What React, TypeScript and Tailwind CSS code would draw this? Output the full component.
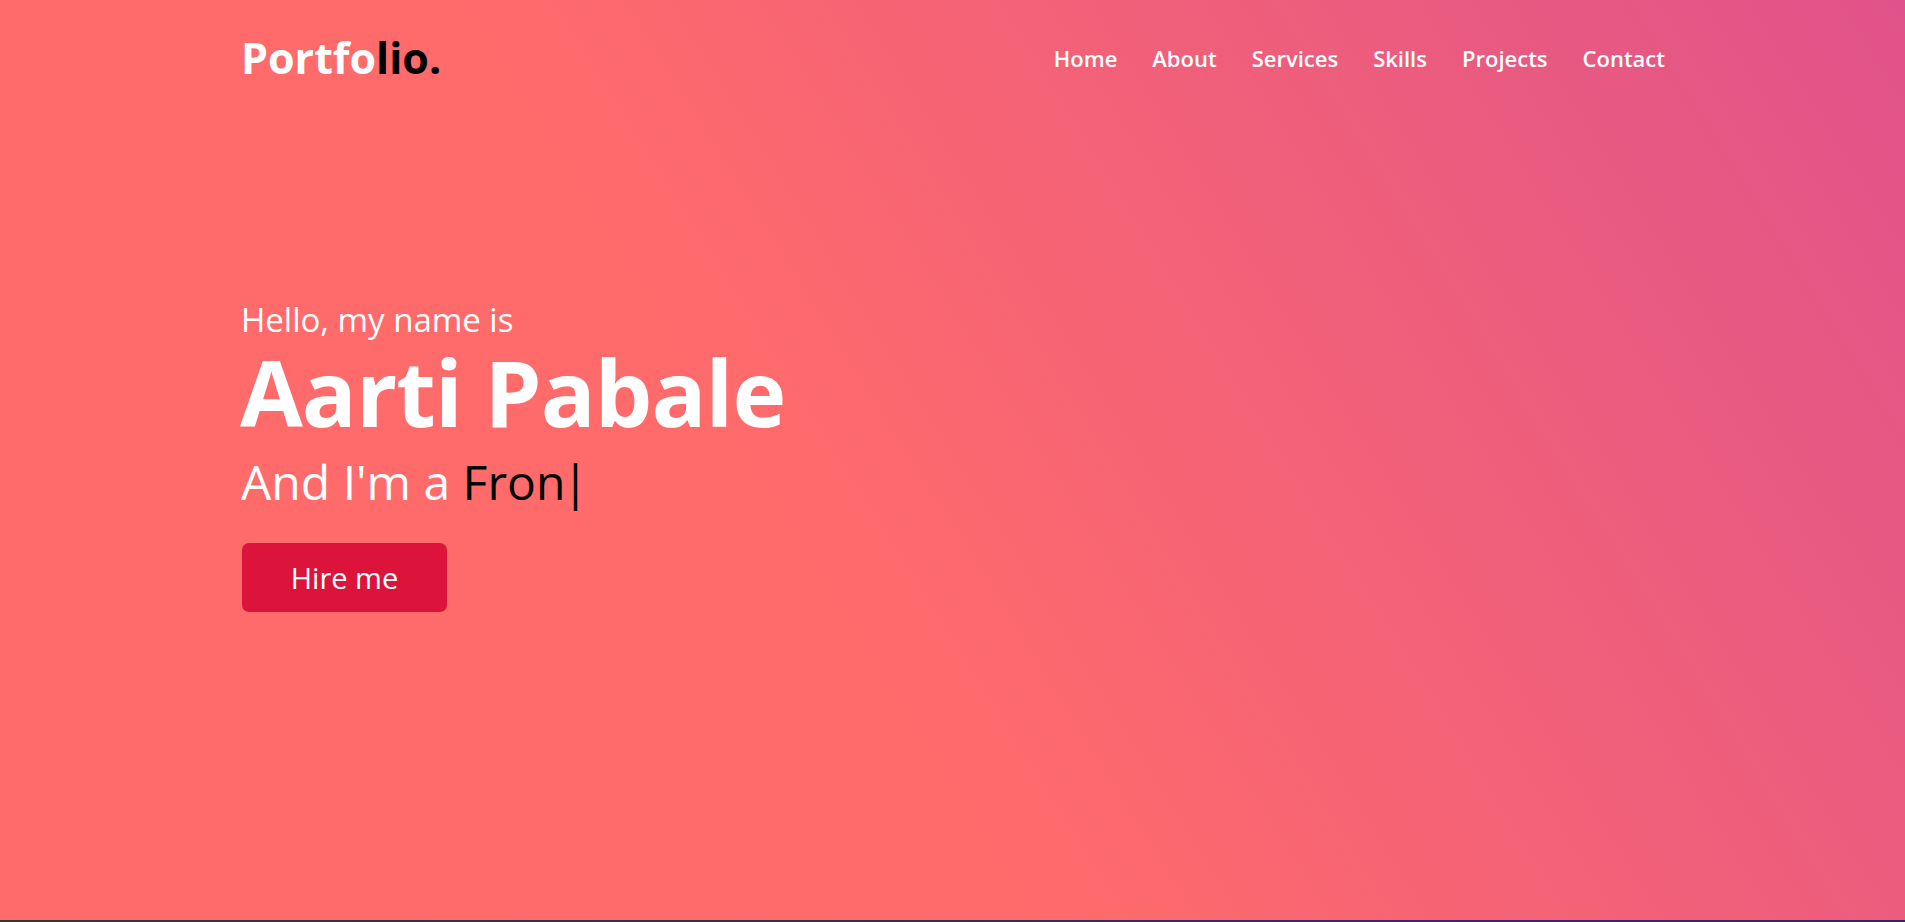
import React from "react";

const links = ["Home", "About", "Services", "Skills", "Projects", "Contact"];

const Navbar = () => {
  return (
    <nav className="flex items-center justify-between px-[240px] pt-[33px]">
      <a href="#" className="ml-[1px] text-[43px] font-bold leading-[50px] text-white">
        Portfo<span className="text-black">lio.</span>
      </a>
      <ul className="flex items-center gap-[35px] pt-[1px]">
        {links.map((link) => (
          <li key={link}>
            <a href="#" className="text-[22px] font-semibold leading-[26px] text-white">
              {link}
            </a>
          </li>
        ))}
      </ul>
    </nav>
  );
};

const Hero = () => {
  return (
    <div className="flex flex-col items-start px-[241px] pt-[217px] text-white">
      <div className="text-[33px] leading-[40px]">Hello, my name is</div>
      <div className="ml-[-1px] mt-[2px] text-[91px] font-bold leading-[100px] tracking-[-0.01em]">
        Aarti Pabale
      </div>
      <div className="mt-[12px] text-[48px] leading-[56px]">
        And I'm a <span className="text-black">Fron</span>
        <span className="ml-[-3px] text-black">|</span>
      </div>
      <a
        href="#"
        className="ml-[1px] mt-[33px] flex h-[69px] w-[205px] items-center justify-center rounded-[7px] border-[2.5px] border-[#dc143c] bg-[#dc143c] text-[29px] leading-[36px] text-white"
      >
        Hire me
      </a>
    </div>
  );
};

export default function App() {
  return (
    <div className="font-['Open_Sans',sans-serif]">
      <section className="h-[920px] bg-[linear-gradient(58deg,#ff6b6b_42%,#e0538a_100%)]">
        <Navbar />
        <Hero />
      </section>
      <div className="h-[2px] bg-[linear-gradient(90deg,#2e3a38,#2c3354_50%,#34287a_75%,#2d2b5c)]" />
    </div>
  );
}
